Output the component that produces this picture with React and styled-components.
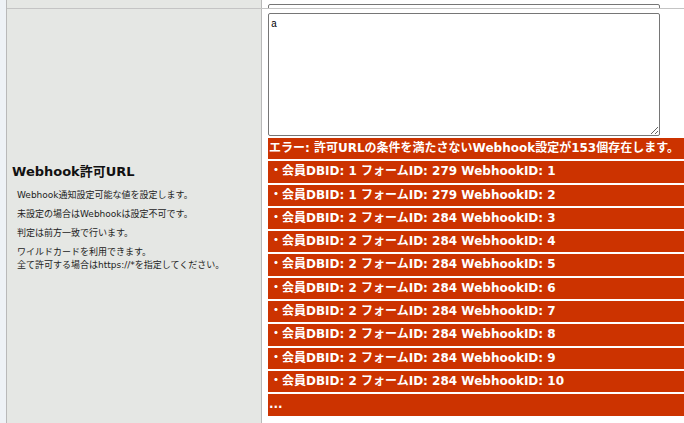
import React from 'react';
import styled, { createGlobalStyle } from 'styled-components';

const GlobalStyle = createGlobalStyle`
  html, body {
    margin: 0;
    padding: 0;
    overflow: hidden;
    background: #eef2f6;
  }
  body {
    font-family: "DejaVu Sans", "Noto Sans CJK JP", sans-serif;
  }
`;

const Page = styled.div`
  padding-left: 6px;
  width: 720px;
`;

const Table = styled.div`
  border-left: 1px solid #b9b9b9;
`;

const Row = styled.div`
  display: grid;
  grid-template-columns: 255px 1fr;
  border-bottom: ${(p) => (p.$last ? 'none' : '1px solid #c4c4c4')};
  height: ${(p) => (p.$clip ? '8px' : 'auto')};
  overflow: hidden;
`;

const LabelCell = styled.div`
  background: #e5e7e4;
  border-right: 1px solid #b9b9b9;
  display: flex;
  flex-direction: column;
  justify-content: center;
  padding: ${(p) => (p.$pad ? '7px 5px 0' : '0 5px')};
`;

const ValueCell = styled.div`
  background: #fff;
  padding: ${(p) => (p.$bottom ? '4px 6px 5px' : '4px 6px 8px')};
  display: flex;
  flex-direction: column;
  justify-content: ${(p) => (p.$bottom ? 'flex-end' : 'flex-start')};
`;

const Title = styled.div`
  font-size: 13px;
  font-weight: bold;
  color: #111;
  margin: 0 0 9px;
`;

const Note = styled.p`
  font-size: 9px;
  line-height: 13px;
  color: #222;
  margin: 0 0 6px 5px;
`;

const Area = styled.textarea`
  display: block;
  box-sizing: border-box;
  width: 392px;
  height: 123px;
  margin: 0;
  padding: 5px 2px;
  font-family: "Liberation Mono", monospace;
  font-size: 10px;
  border: 1px solid #767676;
  border-radius: 2px;
  flex: none;
`;

const ErrorList = styled.div`
  margin-top: 2px;
  display: flex;
  flex-direction: column;
  gap: 2px;
  margin-right: -40px;
`;

const ErrorLine = styled.div`
  background: #cc3300;
  color: #fff;
  font-size: 12px;
  font-weight: bold;
  line-height: 21.3px;
  padding-left: ${(p) => (p.$item ? '2px' : '1px')};
  white-space: nowrap;
`;

const items = [
  [1, 279, 1],
  [1, 279, 2],
  [2, 284, 3],
  [2, 284, 4],
  [2, 284, 5],
  [2, 284, 6],
  [2, 284, 7],
  [2, 284, 8],
  [2, 284, 9],
  [2, 284, 10],
];

const App = () => (
  <>
    <GlobalStyle />
    <Page>
      <Table>
        <Row $clip>
          <LabelCell />
          <ValueCell $bottom>
            <Area readOnly defaultValue="" />
          </ValueCell>
        </Row>
        <Row $last>
          <LabelCell $pad>
            <Title>Webhook許可URL</Title>
            <Note>Webhook通知設定可能な値を設定します。</Note>
            <Note>未設定の場合はWebhookは設定不可です。</Note>
            <Note>判定は前方一致で行います。</Note>
            <Note>
              ワイルドカードを利用できます。
              <br />
              全て許可する場合はhttps://*を指定してください。
            </Note>
          </LabelCell>
          <ValueCell>
            <Area defaultValue="a" />
            <ErrorList>
              <ErrorLine>エラー: 許可URLの条件を満たさないWebhook設定が153個存在します。</ErrorLine>
              {items.map(([db, form, hook]) => (
                <ErrorLine $item key={hook}>
                  ・会員DBID: {db} フォームID: {form} WebhookID: {hook}
                </ErrorLine>
              ))}
              <ErrorLine>...</ErrorLine>
            </ErrorList>
          </ValueCell>
        </Row>
      </Table>
    </Page>
  </>
);

export default App;
